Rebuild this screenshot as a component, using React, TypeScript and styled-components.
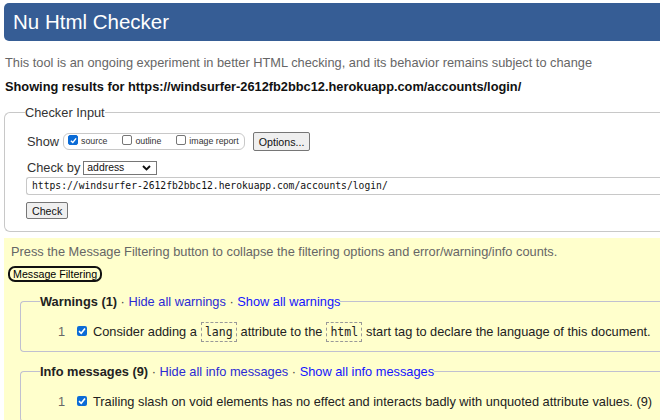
import React from "react";
import styled, { createGlobalStyle } from "styled-components";

const Global = createGlobalStyle`
  html, body { margin: 0; padding: 0; background: #fff; overflow: hidden; }
  body { font-family: "Liberation Sans", Arial, sans-serif; font-size: 12.8px; color: #222; }
`;

const Page = styled.div`
  width: 700px;
  padding: 3px 0 0 4px;
  box-sizing: border-box;
`;

const Header = styled.h1`
  margin: 0;
  height: 38px;
  background: #365d95;
  border-radius: 5px 0 0 5px;
  color: #fff;
  font-weight: normal;
  font-size: 20.5px;
  line-height: 37px;
  padding-left: 9px;
`;

const Intro = styled.p`
  margin: 14px 0 0 1px;
  color: #666;
  line-height: 15px;
`;

const Showing = styled.p`
  margin: 9px 0 0 1px;
  font-weight: bold;
  color: #111;
  line-height: 15px;
`;

const Fieldset = styled.fieldset`
  margin: 11px 0 0 0;
  border: 1px solid #c8c8c8;
  border-right: none;
  border-radius: 6px 0 0 6px;
  padding: 12px 0 12px 22px;
`;

const Legend = styled.legend`
  color: #333;
  padding: 0;
  margin-left: -2px;
  line-height: 15px;
`;

const Row = styled.div<{ mt?: number }>`
  display: flex;
  align-items: center;
  color: #333;
  line-height: 15px;
  min-height: 15px;
  margin-top: ${(p) => p.mt ?? 0}px;
`;

const ShowBox = styled.div`
  display: flex;
  align-items: center;
  border: 1px solid #c8c8c8;
  border-radius: 6px;
  height: 15px;
  padding: 0 5px 0 4px;
  margin-left: 4px;
`;

const SmallLabel = styled.label<{ gap?: number }>`
  display: flex;
  align-items: center;
  font-size: 8.8px;
  color: #333;
  margin-right: ${(p) => p.gap ?? 0}px;
`;

const Box = styled.span<{ checked?: boolean }>`
  display: inline-flex;
  align-items: center;
  justify-content: center;
  width: 8px;
  height: 8px;
  border: 1px solid ${(p) => (p.checked ? "#0b6bd6" : "#767676")};
  background: ${(p) => (p.checked ? "#0b6bd6" : "#fff")};
  border-radius: 2px;
  margin: -3px 3px 0 0;
  box-sizing: content-box;
`;

const Btn = styled.button<{ ml?: number; h?: number }>`
  font-family: "Liberation Sans", Arial, sans-serif;
  font-size: 10.67px;
  color: #111;
  background: #efefef;
  border: 1px solid #767676;
  border-radius: 2px;
  padding: 0 5px;
  height: ${(p) => p.h ?? 19}px;
  margin-left: ${(p) => p.ml ?? 0}px;
`;

const Select = styled.div`
  display: flex;
  align-items: center;
  justify-content: space-between;
  width: 64px;
  height: 12px;
  border: 1px solid #767676;
  font-size: 10.4px;
  color: #111;
  padding: 0 5px 0 3px;
  margin-left: 3px;
  line-height: 12px;
`;

const UrlInput = styled.div`
  margin: 2px 0 0 -1px;
  height: 16px;
  border: 1px solid #c8c8c8;
  border-right: none;
  border-radius: 3px 0 0 3px;
  font-family: "DejaVu Sans Mono", "Liberation Mono", monospace;
  font-size: 9.7px;
  color: #111;
  line-height: 16px;
  padding-left: 5px;
`;

const Yellow = styled.div`
  margin-top: 6px;
  background: #ffffcc;
  padding: 6px 0 2px 4px;
`;

const Press = styled.p`
  margin: 0 0 0 3px;
  color: #666;
  line-height: 15px;
`;

const FilterBtn = styled.button`
  display: block;
  margin-top: 7px;
  font-family: "Liberation Sans", Arial, sans-serif;
  font-size: 10.67px;
  color: #000;
  background: transparent;
  border: 2px solid #111;
  border-radius: 7px;
  padding: 0 3px;
  height: 16px;
  line-height: 11px;
`;

const Group = styled.fieldset<{ mt: number }>`
  margin: ${(p) => p.mt}px 0 0 12px;
  border: 1px solid #c0c0d0;
  border-right: none;
  border-radius: 4px 0 0 4px;
  padding: 13px 0 9px 0;
`;

const GLegend = styled.legend`
  padding: 0;
  margin-left: 19px;
  color: #222;
  line-height: 15px;
`;

const Bold = styled.b`
  color: #222;
`;

const Link = styled.a<{ dark?: boolean }>`
  color: ${(p) => (p.dark ? "#2b2bd4" : "#1414ff")};
  text-decoration: none;
`;

const Dot = styled.span`
  color: #444;
`;

const Msg = styled.div`
  display: flex;
  align-items: center;
  color: #222;
  line-height: 20px;
  white-space: nowrap;
  margin-left: 37px;
`;

const Num = styled.span`
  color: #666;
  width: 19px;
`;

const MsgCheck = styled.span`
  display: inline-flex;
  align-items: center;
  justify-content: center;
  width: 10px;
  height: 10px;
  background: #0b6bd6;
  border-radius: 2px;
  margin: -3px 6px 0 0;
`;

const Code = styled.code`
  font-family: "DejaVu Sans Mono", "Liberation Mono", monospace;
  font-size: 11.5px;
  border: 1px dashed #999;
  padding: 1px 3px 1px;
  margin: 0 4px;
  line-height: 16px;
`;

const Tick = ({ s = 8 }: { s?: number }) => (
  <svg width={s} height={s} viewBox="0 0 8 8">
    <path d="M1 4.2 L3.2 6.3 L7 1.6" stroke="#fff" strokeWidth="1.6" fill="none" />
  </svg>
);

export default function App() {
  return (
    <>
      <Global />
      <Page>
        <Header>Nu Html Checker</Header>
        <Intro>This tool is an ongoing experiment in better HTML checking, and its behavior remains subject to change</Intro>
        <Showing>Showing results for https://windsurfer-2612fb2bbc12.herokuapp.com/accounts/login/</Showing>
        <Fieldset>
          <Legend>Checker Input</Legend>
          <Row style={{ height: 19 }}>
            Show
            <ShowBox>
              <SmallLabel gap={15}>
                <Box checked>
                  <Tick s={7} />
                </Box>
                source
              </SmallLabel>
              <SmallLabel gap={15}>
                <Box />
                outline
              </SmallLabel>
              <SmallLabel>
                <Box />
                image report
              </SmallLabel>
            </ShowBox>
            <Btn ml={8}>Options...</Btn>
          </Row>
          <Row mt={9}>
            Check by
            <Select>
              address
              <svg width="9" height="6" viewBox="0 0 9 6">
                <path d="M1 1 L4.5 4.5 L8 1" stroke="#111" strokeWidth="1.9" fill="none" />
              </svg>
            </Select>
          </Row>
          <UrlInput>https://windsurfer-2612fb2bbc12.herokuapp.com/accounts/login/</UrlInput>
          <Row mt={7}>
            <Btn h={17} ml={-1}>
              Check
            </Btn>
          </Row>
        </Fieldset>
        <Yellow>
          <Press>Press the Message Filtering button to collapse the filtering options and error/warning/info counts.</Press>
          <FilterBtn>Message Filtering</FilterBtn>
          <Group mt={12}>
            <GLegend>
              <Bold>Warnings (1)</Bold> <Dot>·</Dot> <Link dark>Hide all warnings</Link> <Dot>·</Dot>{" "}
              <Link>Show all warnings</Link>
            </GLegend>
            <Msg>
              <Num>1</Num>
              <MsgCheck>
                <Tick />
              </MsgCheck>
              Consider adding a<Code>lang</Code>attribute to the<Code>html</Code>start tag to declare the language of this document.
            </Msg>
          </Group>
          <Group mt={12}>
            <GLegend>
              <Bold>Info messages (9)</Bold> <Dot>·</Dot> <Link dark>Hide all info messages</Link> <Dot>·</Dot>{" "}
              <Link>Show all info messages</Link>
            </GLegend>
            <Msg>
              <Num>1</Num>
              <MsgCheck>
                <Tick />
              </MsgCheck>
              Trailing slash on void elements has no effect and interacts badly with unquoted attribute values. (9)
            </Msg>
          </Group>
        </Yellow>
      </Page>
    </>
  );
}
